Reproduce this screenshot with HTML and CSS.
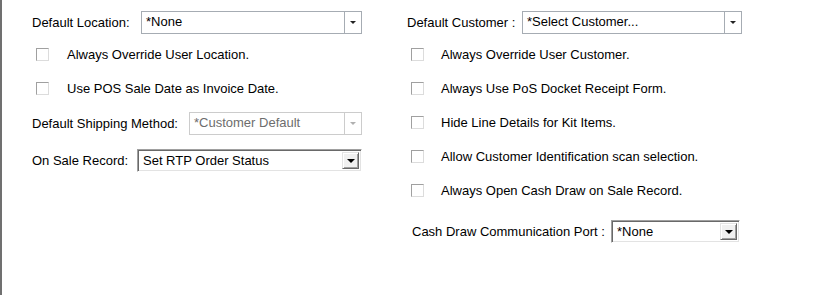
FILE: index.html
```html
<!DOCTYPE html>
<html>

<head>
    <title>Sales Settings</title>

    <link rel="stylesheet" href="styles.css">
</head>

<body>
    <div class="panel">
        <!-- Left column -->
        <div class="col col-left">
            <div class="field">
                <span class="label label-location">Default Location:</span>
                <div class="combo combo-location">
                    <span class="value">*None</span>
                    <span class="drop"><i class="arrow"></i></span>
                </div>
            </div>
            <div class="check"><span class="box"></span>Always Override User Location.</div>
            <div class="check"><span class="box"></span>Use POS Sale Date as Invoice Date.</div>
            <div class="field field-shipping">
                <span class="label label-shipping">Default Shipping Method:</span>
                <div class="combo combo-shipping disabled">
                    <span class="value">*Customer Default</span>
                    <span class="drop"><i class="arrow"></i></span>
                </div>
            </div>
            <div class="field field-sale">
                <span class="label label-sale">On Sale Record:</span>
                <div class="classic combo-sale">
                    <span class="value">Set RTP Order Status</span>
                    <span class="button"><i class="arrow"></i></span>
                </div>
            </div>
        </div>

        <!-- Right column -->
        <div class="col col-right">
            <div class="field">
                <span class="label label-customer">Default Customer :</span>
                <div class="combo combo-customer">
                    <span class="value">*Select Customer...</span>
                    <span class="drop"><i class="arrow"></i></span>
                </div>
            </div>
            <div class="check"><span class="box"></span>Always Override User Customer.</div>
            <div class="check"><span class="box"></span>Always Use PoS Docket Receipt Form.</div>
            <div class="check"><span class="box"></span>Hide Line Details for Kit Items.</div>
            <div class="check"><span class="box"></span>Allow Customer Identification scan selection.</div>
            <div class="check"><span class="box"></span>Always Open Cash Draw on Sale Record.</div>
            <div class="field field-cash">
                <span class="label label-cash">Cash Draw Communication Port :</span>
                <div class="classic combo-cash">
                    <span class="value">*None</span>
                    <span class="button"><i class="arrow"></i></span>
                </div>
            </div>
        </div>
    </div>
</body>

</html>
```

FILE: styles.css
```css
/* Page */
html,
body {
    margin: 0;
    height: 100%;
    background-color: #ffffff;
}

body {
    font-family: "Liberation Sans", Arial, sans-serif;
    font-size: 13px;
    color: #000000;
}

.panel {
    display: flex;
    height: 100%;
    box-sizing: border-box;
    border-left: 2px solid #707070;
}

.col {
    display: flex;
    flex-direction: column;
    padding-top: 11px;
    box-sizing: border-box;
}

.col-left {
    width: 405px;
    padding-left: 30px;
}

.col-right {
    flex: 1;
}

/* Label + combo rows */
.field {
    display: flex;
    align-items: center;
    height: 23px;
}

.label {
    flex: none;
    white-space: nowrap;
}

.label-location {
    width: 109px;
}

.label-shipping {
    width: 157px;
}

.label-sale {
    width: 105px;
}

.label-customer {
    width: 115px;
}

.label-cash {
    width: 199px;
}

.field-shipping {
    margin-top: 7px;
}

.field-sale {
    margin-top: 14px;
}

.field-cash {
    margin-top: 13px;
    padding-left: 5px;
}

/* Flat combo box */
.combo {
    display: flex;
    height: 23px;
    box-sizing: border-box;
    border: 1px solid #a6acb3;
    background-color: #ffffff;
}

.combo .value {
    flex: 1;
    padding-left: 4px;
    line-height: 20px;
    white-space: nowrap;
    overflow: hidden;
}

.combo .drop {
    width: 16px;
    border-left: 1px solid #a6acb3;
    display: flex;
    align-items: center;
    justify-content: center;
}

.combo .arrow {
    width: 0;
    height: 0;
    border-left: 3px solid transparent;
    border-right: 3px solid transparent;
    border-top: 3px solid #222222;
}

.combo.disabled {
    border-color: #cccccc;
}

.combo.disabled .value {
    color: #6d6d6d;
}

.combo.disabled .drop {
    border-left-color: #cccccc;
}

.combo.disabled .arrow {
    border-top-color: #b0b0b0;
}

.combo-location {
    width: 221px;
}

.combo-customer {
    width: 220px;
}

.combo-shipping {
    width: 173px;
}

/* Classic 3D combo box */
.classic {
    display: flex;
    height: 23px;
    box-sizing: border-box;
    border-top: 1px solid #a0a0a0;
    border-left: 1px solid #a0a0a0;
    border-right: 1px solid #ffffff;
    border-bottom: 1px solid #ffffff;
    box-shadow: inset 1px 1px 0 #696969, inset -1px -1px 0 #e3e3e3;
    padding: 2px;
    background-color: #ffffff;
}

.classic .value {
    flex: 1;
    padding-left: 3px;
    line-height: 17px;
    white-space: nowrap;
    overflow: hidden;
}

.classic .button {
    width: 17px;
    box-sizing: border-box;
    background-color: #f0f0f0;
    border-top: 1px solid #e3e3e3;
    border-left: 1px solid #e3e3e3;
    border-right: 1px solid #696969;
    border-bottom: 1px solid #696969;
    box-shadow: inset 1px 1px 0 #ffffff, inset -1px -1px 0 #a0a0a0;
    display: flex;
    align-items: center;
    justify-content: center;
}

.classic .arrow {
    width: 0;
    height: 0;
    border-left: 4px solid transparent;
    border-right: 4px solid transparent;
    border-top: 4px solid #000000;
}

.combo-sale {
    width: 225px;
}

.combo-cash {
    width: 129px;
}

/* Check boxes */
.check {
    display: flex;
    align-items: center;
    height: 34px;
    padding-left: 4px;
    white-space: nowrap;
}

.col-left .check:first-of-type {
    margin-top: 3px;
}

.col-right .field + .check {
    margin-top: 3px;
}

.col-left .field + .check {
    margin-top: 3px;
}

.box {
    flex: none;
    width: 13px;
    height: 13px;
    box-sizing: border-box;
    margin-right: 18px;
    border-top: 1px solid #a0a0a0;
    border-left: 1px solid #a0a0a0;
    border-right: 1px solid #dcdcdc;
    border-bottom: 1px solid #dcdcdc;
    background-color: #ffffff;
}

.col-right .box {
    margin-right: 17px;
}
```
